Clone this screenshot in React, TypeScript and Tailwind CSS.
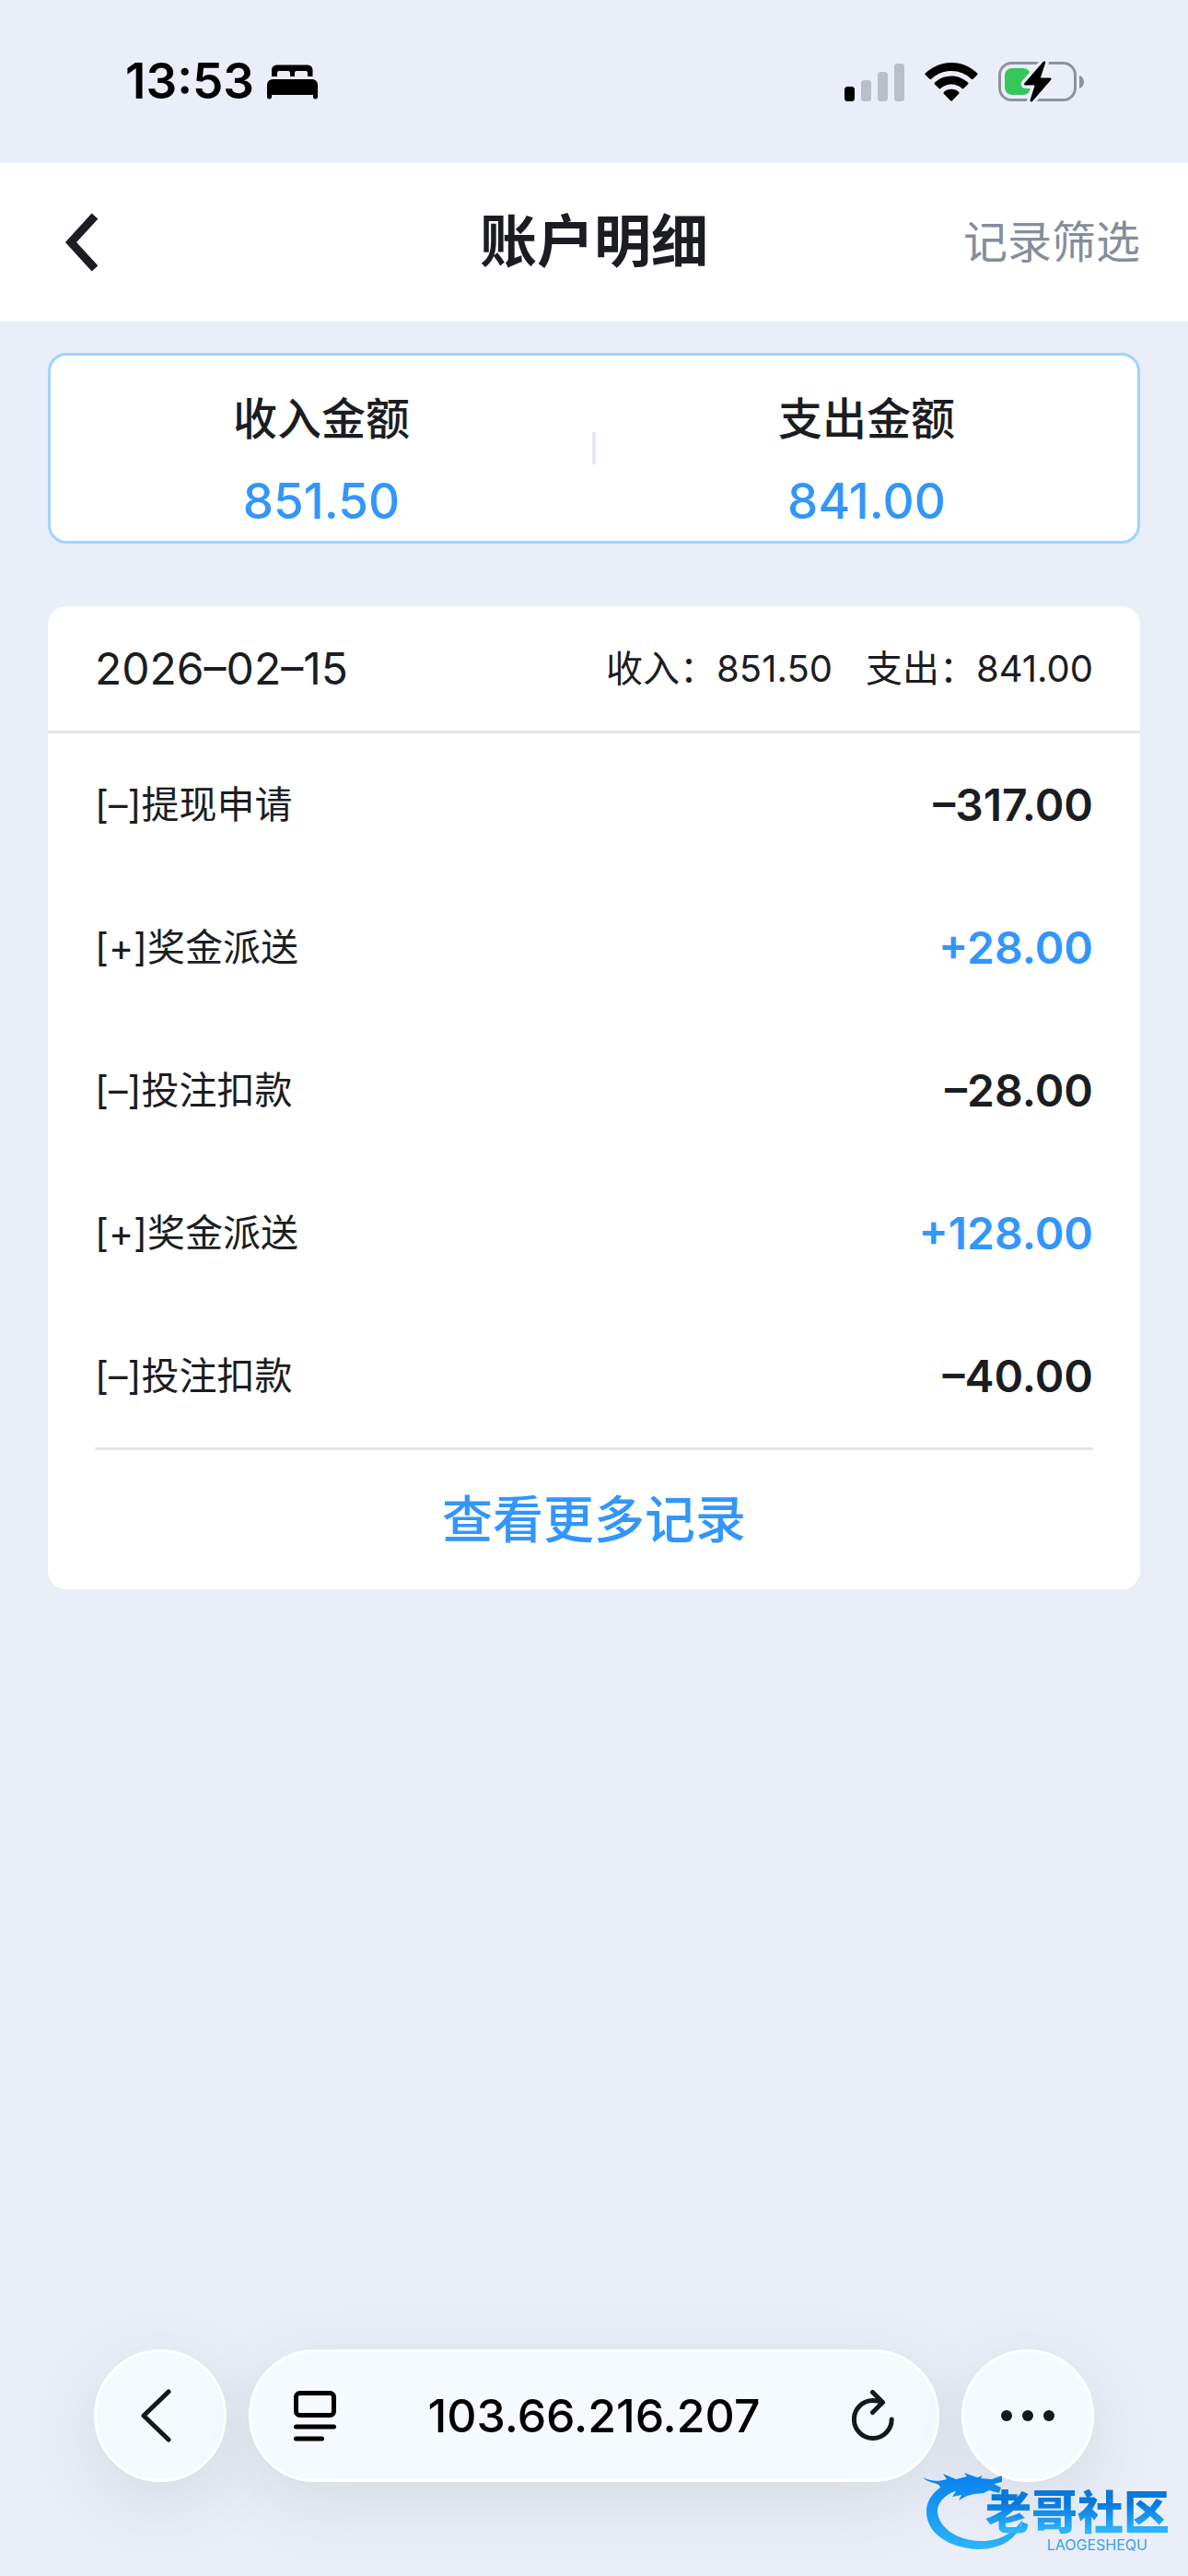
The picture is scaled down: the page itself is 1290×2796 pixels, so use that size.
const records = [
  { type: "–", title: "提现申请", amount: "317.00" },
  { type: "+", title: "奖金派送", amount: "28.00" },
  { type: "–", title: "投注扣款", amount: "28.00" },
  { type: "+", title: "奖金派送", amount: "128.00" },
  { type: "–", title: "投注扣款", amount: "40.00" },
]

const totals = [
  { label: "收入金额", value: "851.50" },
  { label: "支出金额", value: "841.00" },
]

function StatusBar() {
  return (
    <div className="flex h-[177px] items-center justify-between pr-[112px] pl-[136px] text-black">
      <div className="flex items-center gap-[14px]">
        <span className="text-[53px] leading-none font-semibold">13:53</span>
        <svg width="55" height="38" viewBox="0 0 55 38" fill="currentColor">
          <path d="M5 13V6a5.500 5.500 0 0 1 5.500-5.500H44a5.500 5.500 0 0 1 5.500 5.500v7H44V9a2 2 0 0 0-2-2H32a2 2 0 0 0-2 2v4h-5V9a2 2 0 0 0-2-2H13a2 2 0 0 0-2 2v4z" />
          <path d="M0 22a6 6 0 0 1 6-6h43a6 6 0 0 1 6 6v13a2.500 2.500 0 0 1-5 0v-2H5v2a2.500 2.500 0 0 1-5 0z" />
        </svg>
      </div>
      <div className="flex items-center gap-[22px]">
        <svg width="65" height="42" viewBox="0 0 65 42">
          <rect x="0" y="26" width="11" height="16" rx="3.500" fill="#000" />
          <g fill="#babec8">
            <rect x="18" y="19" width="11" height="23" rx="3.500" />
            <rect x="36" y="10" width="11" height="32" rx="3.500" />
            <rect x="54" y="1" width="11" height="41" rx="3.500" />
          </g>
        </svg>
        <svg width="58" height="42" viewBox="0 0 58 42" fill="currentColor">
          <path d="M29 0C40 0 50 4.500 57.200 11.400a1.300 1.300 0 0 1 0 1.900l-4.600 4.500a1.300 1.300 0 0 1-1.800 0A31.500 31.500 0 0 0 29 9 31.500 31.500 0 0 0 7.200 17.800a1.300 1.300 0 0 1-1.800 0L.8 13.300a1.300 1.300 0 0 1 0-1.900C8 4.500 18 0 29 0z" />
          <path d="M29 14.500c7 0 13.300 2.700 18 7.100a1.300 1.300 0 0 1 0 1.900l-4.600 4.500a1.300 1.300 0 0 1-1.800 0A17.500 17.500 0 0 0 29 23.500 17.500 17.500 0 0 0 17.400 28a1.300 1.300 0 0 1-1.800 0L11 23.500a1.300 1.300 0 0 1 0-1.900 26.300 26.300 0 0 1 18-7.100z" />
          <path d="M29 28.800c3.200 0 6.100 1.200 8.200 3.200.5.500.5 1.200 0 1.700l-7.300 7.500a1.300 1.300 0 0 1-1.800 0l-7.300-7.500c-.5-.5-.5-1.200 0-1.700a12 12 0 0 1 8.200-3.200z" />
        </svg>
        <svg width="94" height="46" viewBox="0 0 94 46">
          <rect x="1.500" y="2.500" width="82" height="40" rx="13" fill="none" stroke="#8e929b" strokeWidth="3" />
          <path d="M88 16c3.300 1.200 5 3.600 5 7s-1.700 5.800-5 7z" fill="#8e929b" />
          <rect x="7" y="8" width="28" height="29" rx="8" fill="#35c759" />
          <path d="M48.500 1.200 28.500 24.200c-.8 1-.3 2.300 1 2.300h10.200l-5 15.800c-.7 2 1.200 2.900 2.600 1.400l19.800-23c.8-1 .3-2.300-1-2.300H45.800L51.100 2.600c.7-2-1.200-2.900-2.600-1.400z" fill="#000" stroke="#e9eef8" strokeWidth="7" paintOrder="stroke" />
        </svg>
      </div>
    </div>
  )
}

function BrowserBar() {
  return (
    <nav className="flex gap-6 px-[102px] pb-[102px] text-[#141820]">
      <button aria-label="后退" className="flex size-[144px] items-center justify-center rounded-full border-3 border-white bg-[#f5faff] shadow-[0_20px_70px_rgba(100,105,115,0.15)]">
        <svg width="34" height="58" viewBox="0 0 34 58" className="mr-2" fill="none" stroke="currentColor" strokeWidth="5" strokeLinecap="round" strokeLinejoin="round">
          <path d="M30 3 3 29l27 26" />
        </svg>
      </button>
      <div className="flex h-[144px] flex-1 items-center justify-between rounded-full border-3 border-white bg-[#f5faff] px-[46px] text-black shadow-[0_20px_70px_rgba(100,105,115,0.15)]">
        <button aria-label="页面菜单">
          <svg width="46" height="56" viewBox="0 0 46 56" fill="none" stroke="currentColor" strokeWidth="5" strokeLinecap="round">
            <rect x="2.500" y="3.500" width="41" height="24" rx="4" />
            <path d="M2.500 40h41M2.500 53h28" />
          </svg>
        </button>
        <span className="text-[50px] leading-none font-medium">103.66.216.207</span>
        <button aria-label="重新加载" className="text-[#141820]">
          <svg width="46" height="56" viewBox="0 0 46 56" fill="none" stroke="currentColor" strokeWidth="5" strokeLinecap="round" strokeLinejoin="round">
            <path d="M43.200 32a20.400 20.400 0 1 1-20.400-20.400c3.500 0 6.500.3 10.200 2" />
            <path d="M22.500 2.500 33.500 13.500 22.500 24.500" />
          </svg>
        </button>
      </div>
      <button aria-label="更多" className="flex size-[144px] items-center justify-center gap-[11px] rounded-full border-3 border-white bg-[#f5faff] shadow-[0_20px_70px_rgba(100,105,115,0.15)]">
        <span className="size-3 rounded-full bg-current" />
        <span className="size-3 rounded-full bg-current" />
        <span className="size-3 rounded-full bg-current" />
      </button>
    </nav>
  )
}

function CommunityLogo() {
  return (
    <div className="absolute right-5 bottom-6 h-[94px] w-[268px]">
      <svg width="112" height="90" viewBox="0 0 112 90" className="absolute top-1 left-0">
        <defs>
          <linearGradient id="dragon" x1="0" y1="0" x2="0" y2="90" gradientUnits="userSpaceOnUse">
            <stop offset="0.1" stopColor="#0a84ee" />
            <stop offset="1" stopColor="#2fb8fa" />
          </linearGradient>
        </defs>
        <g fill="url(#dragon)">
          <path d="M40 9C18 14 4 28 4 44c0 23 23 40 56 41 26 0 44-12 48-32-9 14-25 24-46 23C36 75 17 61 16 44c0-12 12-23 34-26z" />
          <path d="M0 7c8 4 16 5 26 2l-4-6 14 6 12-3-3-4 14 5 6-2-2 3 12 1 11-4v7l-9 2 8 4-2 6-11-3-6 3-10 1-8 2-9 5 3-6-10 2 4-6-14 1-4-7C18 13 7 14 0 7z" />
        </g>
      </svg>
      <div className="absolute top-6 right-0 flex flex-col items-end">
        <span className="bg-linear-to-b from-[#0878dc] from-30% to-[#2fb4f8] to-90% bg-clip-text text-[50px] leading-[50px] font-black text-transparent">老哥社区</span>
        <span className="mr-6 text-[16px] leading-[20px] text-[#3f9fe8]">LAOGESHEQU</span>
      </div>
    </div>
  )
}

export default function App() {
  return (
    <div lang="zh-CN" className="relative flex min-h-screen flex-col bg-[#e9eef8] font-[Inter,'Noto_Sans_CJK_SC',sans-serif] text-[#1b1d22]">
      <StatusBar />
      <header className="grid h-[172px] grid-cols-[1fr_auto_1fr] items-center bg-white px-[52px]">
        <button aria-label="返回" className="justify-self-start pl-[18px]">
          <svg width="36" height="64" viewBox="0 0 36 64" fill="none" stroke="currentColor" strokeWidth="9">
            <path d="M33 3.500 7 32l26 28.500" />
          </svg>
        </button>
        <h1 className="text-[62px] leading-none font-bold">账户明细</h1>
        <button className="justify-self-end text-[48px] leading-none text-[#868d9c]">记录筛选</button>
      </header>

      <main className="flex-1 px-[52px] pt-[34px]">
        <section className="flex items-center rounded-[20px] border-3 border-[#a0d3ff] bg-white">
          {totals.map((total, index) => (
            <div key={total.label} className="contents">
              {index > 0 && <div className="h-[35px] w-1 bg-[#e6e8f3]" />}
              <div className="flex h-[201px] flex-1 flex-col items-center gap-[39px] pt-[45px] font-medium">
                <h2 className="text-[48px] leading-none">{total.label}</h2>
                <p className="text-[53px] leading-none text-[#3296fb]">{total.value}</p>
              </div>
            </div>
          ))}
        </section>

        <section className="mt-[68px] rounded-[20px] bg-white">
          <div className="flex h-[138px] items-center justify-between border-b-3 border-[#e6e6e6] px-[51px]">
            <time dateTime="2026-02-15" className="text-[48px] leading-none">2026–02–15</time>
            <div className="flex gap-9 text-[40px] leading-none">
              <span>收入：851.50</span>
              <span>支出：841.00</span>
            </div>
          </div>
          <ul className="mx-[51px] border-b-3 border-[#e6e6e6]">
            {records.map((record, index) => (
              <li key={index} className="flex h-[155px] items-center justify-between">
                <span className="text-[41px] leading-none">[{record.type}]{record.title}</span>
                <span className={record.type === "+" ? "text-[48px] leading-none font-semibold text-[#3296fb]" : "text-[48px] leading-none font-semibold"}>
                  {record.type}{record.amount}
                </span>
              </li>
            ))}
          </ul>
          <button className="block h-[151px] w-full text-[55px] leading-none font-medium text-[#3296fb]">查看更多记录</button>
        </section>
      </main>

      <BrowserBar />
      <CommunityLogo />
    </div>
  )
}
